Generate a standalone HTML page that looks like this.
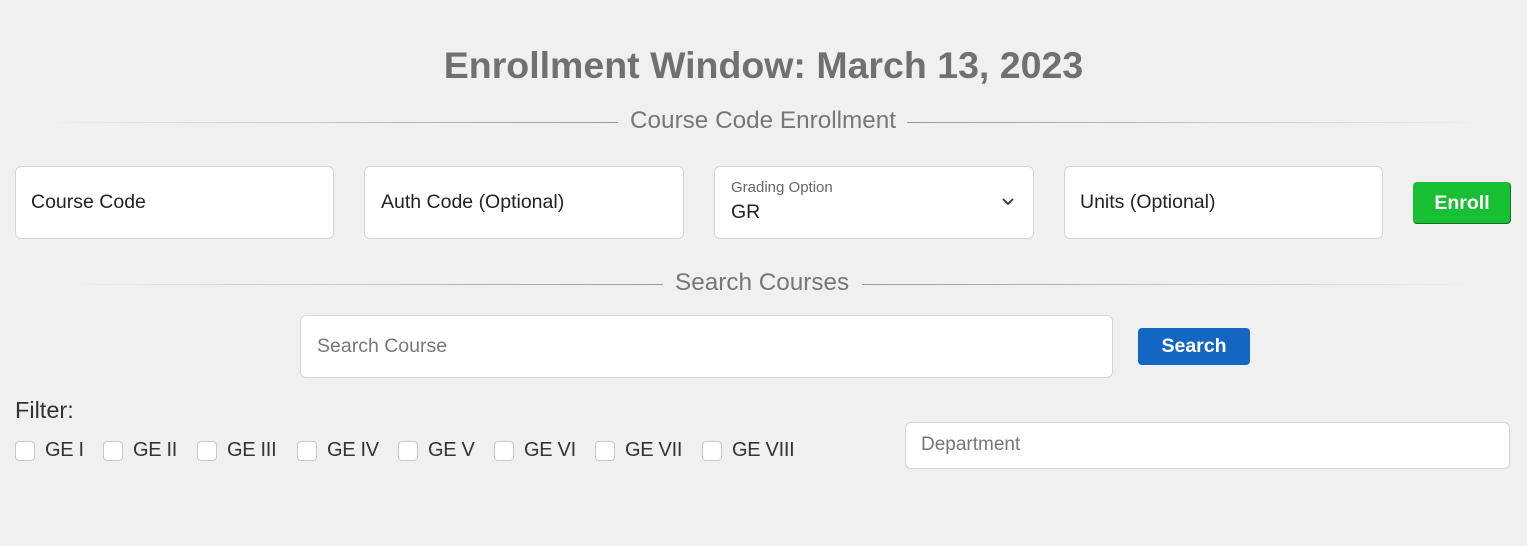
<!DOCTYPE html>
<html><head><meta charset="utf-8"><style>
body{margin:0;width:1527px;height:546px;background:#f0f0f0;font-family:"Liberation Sans",sans-serif;position:relative;overflow:hidden}
.a{position:absolute}
.title{left:0;width:1527px;top:44px;text-align:center;font-size:37.5px;font-weight:bold;color:#707070}
.inp{background:#fff;border:1px solid #d3d6da;border-radius:6px;box-sizing:border-box}
.ph{position:absolute;font-size:19.5px;color:#222}
.cb{width:20px;height:20px;background:#fff;border:1px solid #c8c8c8;border-radius:4px;box-sizing:border-box;top:441px}
.lb{top:439px;font-size:20px;color:#333;letter-spacing:-0.3px}
</style></head><body>
<div class="a title">Enrollment Window: March 13, 2023</div>
<div class="a" style="left:40px;top:122px;width:578px;height:1px;background:linear-gradient(to right,rgba(150,150,150,0),#999)"></div>
<div class="a" style="left:907px;top:122px;width:580px;height:1px;background:linear-gradient(to left,rgba(150,150,150,0),#999)"></div>
<div class="a" style="left:630px;top:107px;font-size:24.3px;color:#777">Course Code Enrollment</div>

<div class="a inp" style="left:15px;top:166px;width:319px;height:73px"><span class="ph" style="left:15px;top:24px">Course Code</span></div>
<div class="a inp" style="left:364px;top:166px;width:320px;height:73px"><span class="ph" style="left:16px;top:24px">Auth Code (Optional)</span></div>
<div class="a inp" style="left:714px;top:166px;width:320px;height:73px"><span class="ph" style="left:16px;top:12px;font-size:15px;color:#666">Grading Option</span><span class="ph" style="left:16px;top:34px">GR</span>
<svg class="a" style="left:286px;top:30px" width="14" height="10" viewBox="0 0 14 10"><path d="M2 2l5 5 5-5" fill="none" stroke="#333" stroke-width="1.8"/></svg></div>
<div class="a inp" style="left:1064px;top:166px;width:319px;height:73px"><span class="ph" style="left:15px;top:24px">Units (Optional)</span></div>
<div class="a" style="left:1413px;top:182px;width:98px;height:42px;background:#17bf33;border:1px solid #1a6b27;border-top-color:#17bf33;border-left-color:#17bf33;box-sizing:border-box;border-radius:4px;color:#fff;font-weight:bold;font-size:19.5px;text-align:center;line-height:40px">Enroll</div>

<div class="a" style="left:60px;top:284px;width:603px;height:1px;background:linear-gradient(to right,rgba(150,150,150,0),#999)"></div>
<div class="a" style="left:862px;top:284px;width:620px;height:1px;background:linear-gradient(to left,rgba(150,150,150,0),#999)"></div>
<div class="a" style="left:675px;top:269px;font-size:24.3px;color:#777">Search Courses</div>

<div class="a inp" style="left:300px;top:315px;width:813px;height:63px"><span class="ph" style="left:16px;top:19px;color:#777">Search Course</span></div>
<div class="a" style="left:1138px;top:328px;width:112px;height:37px;background:#1366c2;border-radius:4px;color:#fff;font-weight:bold;font-size:19.5px;text-align:center;line-height:36px">Search</div>

<div class="a" style="left:15px;top:397px;font-size:23.5px;color:#333">Filter:</div>
<div class="a cb" style="left:15px"></div><div class="a lb" style="left:45px">GE I</div>
<div class="a cb" style="left:103px"></div><div class="a lb" style="left:133px">GE II</div>
<div class="a cb" style="left:197px"></div><div class="a lb" style="left:227px">GE III</div>
<div class="a cb" style="left:297px"></div><div class="a lb" style="left:327px">GE IV</div>
<div class="a cb" style="left:398px"></div><div class="a lb" style="left:428px">GE V</div>
<div class="a cb" style="left:494px"></div><div class="a lb" style="left:524px">GE VI</div>
<div class="a cb" style="left:595px"></div><div class="a lb" style="left:625px">GE VII</div>
<div class="a cb" style="left:702px"></div><div class="a lb" style="left:732px">GE VIII</div>

<div class="a inp" style="left:905px;top:422px;width:605px;height:47px"><span class="ph" style="left:15px;top:11px;font-size:19px;color:#777">Department</span></div>
</body></html>
